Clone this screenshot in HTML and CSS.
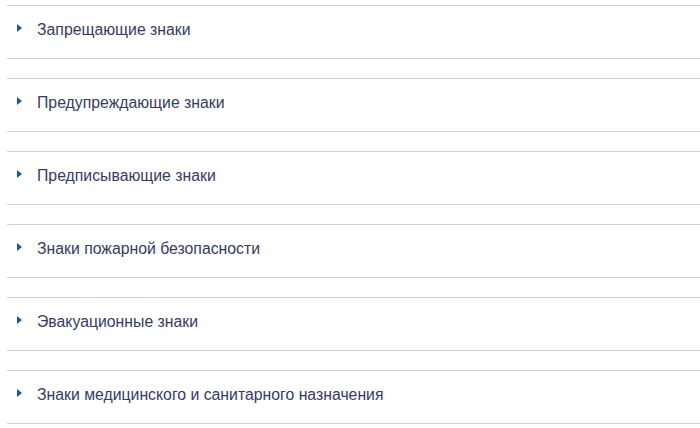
FILE: index.html
```html
<!DOCTYPE html>
<html lang="ru">
<head>
<meta charset="utf-8">
<link rel="stylesheet" href="styles.css">
</head>
<body>
<ul class="list">
  <li class="item"><span class="arrow"></span><span class="label">Запрещающие знаки</span></li>
  <li class="item"><span class="arrow"></span><span class="label">Предупреждающие знаки</span></li>
  <li class="item"><span class="arrow"></span><span class="label">Предписывающие знаки</span></li>
  <li class="item"><span class="arrow"></span><span class="label">Знаки пожарной безопасности</span></li>
  <li class="item"><span class="arrow"></span><span class="label">Эвакуационные знаки</span></li>
  <li class="item"><span class="arrow"></span><span class="label">Знаки медицинского и санитарного назначения</span></li>
</ul>
</body>
</html>
```
FILE: styles.css
```css
html, body {
  margin: 0;
  padding: 0;
  background: #ffffff;
}
body {
  font-family: "Liberation Sans", Arial, sans-serif;
  overflow: hidden;
}
.list {
  list-style: none;
  margin: 0;
  padding: 5px 0 0 7px;
  display: flex;
  flex-direction: column;
  gap: 19px;
}
.item {
  display: flex;
  align-items: center;
  height: 52px;
  border-top: 1px solid #cdcfdc;
  border-bottom: 1px solid #cdcfdc;
  padding-left: 10px;
  box-sizing: content-box;
}
.arrow {
  flex: none;
  width: 0;
  height: 0;
  border-left: 5px solid #1a58a0;
  border-top: 4px solid transparent;
  border-bottom: 4px solid transparent;
  margin-right: 15px;
  margin-top: -8px;
}
.label {
  font-size: 15.8px;
  line-height: 18px;
  color: #363b62;
  margin-top: -4px;
}
```
